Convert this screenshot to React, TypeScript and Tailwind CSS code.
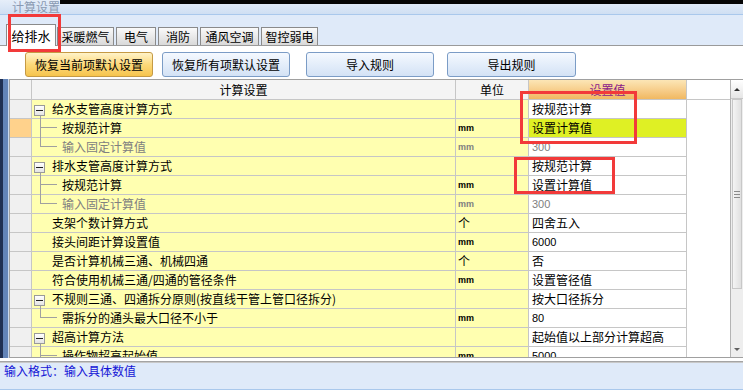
import React from "react"

type Kind = "parent" | "child" | "last" | "plain"

interface Row {
  label: string
  kind: Kind
  unit?: string
  value: string
  gray?: boolean
  num?: boolean
  selected?: boolean
  hl?: boolean
}

const rows: Row[] = [
  { label: "给水支管高度计算方式", kind: "parent", value: "按规范计算" },
  { label: "按规范计算", kind: "child", unit: "mm", value: "设置计算值", selected: true, hl: true },
  { label: "输入固定计算值", kind: "last", unit: "mm", value: "300", gray: true, num: true },
  { label: "排水支管高度计算方式", kind: "parent", value: "按规范计算" },
  { label: "按规范计算", kind: "child", unit: "mm", value: "设置计算值" },
  { label: "输入固定计算值", kind: "last", unit: "mm", value: "300", gray: true, num: true },
  { label: "支架个数计算方式", kind: "plain", unit: "个", value: "四舍五入" },
  { label: "接头间距计算设置值", kind: "plain", unit: "mm", value: "6000", num: true },
  { label: "是否计算机械三通、机械四通", kind: "plain", unit: "个", value: "否" },
  { label: "符合使用机械三通/四通的管径条件", kind: "plain", unit: "mm", value: "设置管径值" },
  { label: "不规则三通、四通拆分原则(按直线干管上管口径拆分)", kind: "parent", value: "按大口径拆分" },
  { label: "需拆分的通头最大口径不小于", kind: "last", unit: "mm", value: "80", num: true },
  { label: "超高计算方法", kind: "parent", value: "起始值以上部分计算超高" },
  { label: "操作物超高起始值", kind: "child", unit: "mm", value: "5000", num: true },
]

const tabs = [
  { t: "采暖燃气", w: "w-[57px]" },
  { t: "电气", w: "w-[40px]" },
  { t: "消防", w: "w-[40px]" },
  { t: "通风空调", w: "w-[59px]" },
  { t: "智控弱电", w: "w-[57px]" },
]

const cjk = "font-['Noto_Sans_CJK_SC',sans-serif]"

function Tree({ kind }: { kind: Kind }) {
  if (kind === "parent") {
    return (
      <>
        <span className="absolute left-[2px] top-[5px] w-[11px] h-[11px] border border-[#9a9a9a] bg-gradient-to-b from-white to-[#e4e4e4] flex items-center justify-center">
          <span className="w-[7px] h-[1px] bg-[#202020]" />
        </span>
        <span className="absolute left-[8px] top-[16px] bottom-[-1px] w-px bg-[#a0a0a0]" />
      </>
    )
  }
  if (kind === "child") {
    return (
      <>
        <span className="absolute left-[8px] top-[-1px] bottom-[-1px] w-px bg-[#a0a0a0]" />
        <span className="absolute left-[8px] top-[8px] w-[17px] h-px bg-[#a0a0a0]" />
      </>
    )
  }
  if (kind === "last") {
    return (
      <>
        <span className="absolute left-[8px] top-[-1px] h-[10px] w-px bg-[#a0a0a0]" />
        <span className="absolute left-[8px] top-[8px] w-[17px] h-px bg-[#a0a0a0]" />
      </>
    )
  }
  return null
}

export default function App() {
  return (
    <div className={`w-[743px] h-[390px] overflow-hidden bg-white relative text-[12px] text-black ${cjk}`}>
      {/* title */}
      <div className="h-[14px] flex bg-gradient-to-b from-[#e6eef9] to-[#cfdff3]">
        <div className="w-[60px] h-[14px] overflow-hidden pl-[12px]">
          <div className="-mt-[1px] text-[12px] leading-[16px] text-[#8a9ab2]">计算设置</div>
        </div>
        <div className="flex-1 border-t-4 border-[#050505]" />
      </div>

      {/* tabs */}
      <div className="h-[32px] border-t border-[#a9c8ec] bg-[#dfeaf9] border-b border-b-[#9a9a9a] flex items-end pl-[6px]">
        <div className="w-[50px] h-[22px] -mb-px bg-white border border-b-0 border-[#8a8a8a] flex items-start justify-center pt-[1px] text-[13px]">
          给排水
        </div>
        <div className="flex items-end gap-[2px] ml-px">
          {tabs.map((t) => (
            <div
              key={t.t}
              className={`${t.w} h-[18px] border border-b-0 border-[#8a8a8a] bg-gradient-to-b from-[#fafafa] to-[#d9d9d9] flex items-center justify-center leading-none`}
            >
              {t.t}
            </div>
          ))}
        </div>
      </div>

      {/* buttons */}
      <div className="h-[33px] pt-[6px] flex items-start">
        <button className="ml-[25px] w-[128px] h-[25px] rounded-[3px] border border-[#c59a45] bg-gradient-to-b from-[#fff3c8] via-[#fcd97a] to-[#f6c44c] leading-none">
          恢复当前项默认设置
        </button>
        <button className="ml-[9px] w-[128px] h-[25px] rounded-[3px] border border-[#7b9cc6] bg-gradient-to-b from-[#f5f9ff] to-[#d3e2f5] leading-none">
          恢复所有项默认设置
        </button>
        <button className="ml-[16px] w-[128px] h-[25px] rounded-[3px] border border-[#7b9cc6] bg-gradient-to-b from-[#f5f9ff] to-[#d3e2f5] leading-none">
          导入规则
        </button>
        <button className="ml-[13px] w-[129px] h-[25px] rounded-[3px] border border-[#7b9cc6] bg-gradient-to-b from-[#f5f9ff] to-[#d3e2f5] leading-none">
          导出规则
        </button>
      </div>

      {/* table */}
      <div className="h-[279px] flex">
        <div className="w-[9px] flex">
          <div className="w-[3px] bg-[#1f2f52]" />
          <div className="w-[5px] bg-[#6384b8]" />
          <div className="w-px bg-[#c9d8ee]" />
        </div>
        <div className="flex-1 flex border border-r-0 border-[#a0a0a0] overflow-hidden">
          <div className="flex-1 overflow-hidden">
            {/* header */}
            <div className="h-[20px] flex border-b border-[#c6c6c6] bg-[#f4f4f4]">
              <div className="w-[22px] border-r border-[#c6c6c6]" />
              <div className="w-[424px] border-r border-[#c6c6c6] flex items-center justify-center">计算设置</div>
              <div className="w-[73px] border-r border-[#c6c6c6] flex items-center justify-center">单位</div>
              <div className="w-[158px] border-r border-[#c6c6c6] flex items-center justify-center text-[#8a1a8a] bg-gradient-to-b from-[#fce6b6] to-[#f1b860]">
                设置值
              </div>
              <div className="flex-1 bg-white" />
            </div>
            {rows.map((r, i) => (
              <div key={i} className="h-[19px] flex">
                <div
                  className={`w-[22px] border-r border-b border-[#c6c6c6] ${r.selected ? "bg-[#ffd28c]" : "bg-[#f0f0f0]"}`}
                />
                <div
                  className={`w-[424px] relative border-r border-b border-[#c6c6c6] bg-[#ffffb0] flex items-center whitespace-nowrap ${
                    r.kind === "child" || r.kind === "last" ? "pl-[30px]" : "pl-[20px]"
                  } ${r.gray ? "text-[#808080]" : ""}`}
                >
                  <Tree kind={r.kind} />
                  {r.label}
                </div>
                <div
                  className={`w-[73px] border-r border-b border-[#c6c6c6] bg-[#ffffb0] flex items-center pl-[2px] ${
                    r.gray ? "text-[#808080]" : ""
                  }`}
                >
                  {r.unit === "mm" ? (
                    <span className="font-['Liberation_Sans',sans-serif] text-[9px] font-bold pt-[1px]">mm</span>
                  ) : (
                    r.unit
                  )}
                </div>
                <div
                  className={`w-[158px] border-r border-b border-[#c6c6c6] flex items-center pl-[3px] whitespace-nowrap ${
                    r.hl ? "bg-[#dff024]" : "bg-white"
                  } ${r.gray ? "text-[#808080]" : ""} ${r.num ? "font-['Liberation_Sans',sans-serif] text-[11px]" : ""}`}
                >
                  {r.value}
                </div>
                <div className="flex-1" />
              </div>
            ))}
          </div>
          {/* scrollbar */}
          <div className="w-[13px] border-l border-[#b4b4b4] flex flex-col bg-[#eeeeee]">
            <div className="h-[19px] bg-gradient-to-b from-white to-[#e6e6e6] border-b border-[#c8c8c8] flex items-center justify-center">
              <span className="w-0 h-0 border-l-[3px] border-r-[3px] border-b-[3px] border-l-transparent border-r-transparent border-b-[#303030]" />
            </div>
            <div className="h-[190px] mx-px bg-gradient-to-r from-[#f4f4f4] to-[#e0e0e0] border border-[#c8c8c8] flex flex-col items-center justify-center gap-[2px]">
              <span className="w-[6px] h-px bg-[#8a8a8a]" />
              <span className="w-[6px] h-px bg-[#8a8a8a]" />
              <span className="w-[6px] h-px bg-[#8a8a8a]" />
            </div>
            <div className="flex-1" />
            <div className="h-[16px] flex items-center justify-center">
              <span className="w-0 h-0 border-l-[3px] border-r-[3px] border-t-[3px] border-l-transparent border-r-transparent border-t-[#606060]" />
            </div>
          </div>
        </div>
      </div>

      {/* status */}
      <div className="h-[3px]" />
      <div className="h-px bg-[#a4a4a4]" />
      <div className="h-px bg-[#c8c8c8]" />
      <div className="h-[27px] bg-[#dfeaf9] border-b border-[#a9c8ec] pl-[4px] pt-[1px] text-[#1515d6] leading-[14px]">
        输入格式：输入具体数值
      </div>

      {/* red annotation boxes */}
      <div className="absolute left-[8px] top-[14px] w-[53px] h-[38px] border-[3px] border-[#f23a3a]" />
      <div className="absolute left-[520px] top-[91px] w-[117px] h-[53px] border-[3px] border-[#f23a3a]" />
      <div className="absolute left-[514px] top-[157px] w-[101px] h-[37px] border-[3px] border-[#f23a3a]" />
    </div>
  )
}
